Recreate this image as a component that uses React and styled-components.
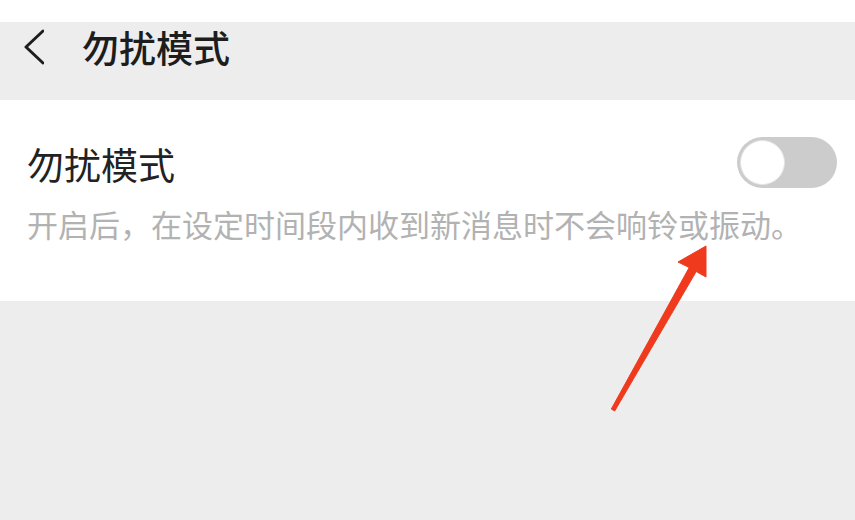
import React from "react"
import styled, { createGlobalStyle } from "styled-components"

const GlobalStyle = createGlobalStyle`
  html, body {
    margin: 0;
    padding: 0;
    background: #ededed;
  }
  body {
    font-family: "Noto Sans CJK SC", "Noto Sans", sans-serif;
  }
`

const Page = styled.div`
  position: relative;
  width: 855px;
  height: 520px;
  display: flex;
  flex-direction: column;
  background: #ededed;
  overflow: hidden;
`

const StatusStrip = styled.div`
  height: 22px;
  background: #ffffff;
`

const NavBar = styled.header`
  height: 78px;
  box-sizing: border-box;
  padding: 0 0 28px 24px;
  display: flex;
  align-items: flex-start;
  background: #ededed;
`

const NavRow = styled.div`
  height: 50px;
  display: flex;
  align-items: center;
  gap: 38px;
`

const BackIcon = styled.svg`
  width: 20px;
  height: 38px;
  display: block;
`

const Title = styled.h1`
  margin: 0;
  font-size: 37px;
  font-weight: 500;
  line-height: 50px;
  color: #1d1d1d;
`

const Card = styled.section`
  background: #ffffff;
  padding: 38px 18px 57px 27px;
  display: flex;
  flex-direction: column;
  gap: 14px;
`

const SettingRow = styled.div`
  height: 52px;
  display: flex;
  align-items: center;
  justify-content: space-between;
`

const Label = styled.span`
  font-size: 37px;
  line-height: 52px;
  color: #222222;
`

const Switch = styled.div`
  position: relative;
  width: 100px;
  height: 51px;
  margin-top: -3px;
  border-radius: 26px;
  background: ${p => (p.$on ? "#07c160" : "#cccccc")};
`

const Knob = styled.div`
  position: absolute;
  top: 3px;
  left: ${p => (p.$on ? "52px" : "3px")};
  width: 45px;
  height: 45px;
  box-sizing: border-box;
  border-radius: 50%;
  background: #ffffff;
  border: 1px solid #e4e4e4;
`

const Hint = styled.p`
  margin: 0;
  font-size: 31px;
  line-height: 40px;
  color: #b2b2b2;
  white-space: nowrap;
`

const Filler = styled.div`
  flex: 1;
  background: #ededed;
`

const Arrow = styled.svg`
  position: absolute;
  left: 0;
  top: 0;
  width: 855px;
  height: 520px;
  pointer-events: none;
`

const App = () => {
  return (
    <>
      <GlobalStyle />
      <Page>
        <StatusStrip />
        <NavBar>
          <NavRow>
            <BackIcon viewBox="0 0 20 38">
              <path
                d="M19 3 L2 19 L19 35"
                fill="none"
                stroke="#1d1d1d"
                strokeWidth="3"
                strokeLinecap="round"
                strokeLinejoin="round"
              />
            </BackIcon>
            <Title>勿扰模式</Title>
          </NavRow>
        </NavBar>
        <Card>
          <SettingRow>
            <Label>勿扰模式</Label>
            <Switch>
              <Knob />
            </Switch>
          </SettingRow>
          <Hint>开启后，在设定时间段内收到新消息时不会响铃或振动。</Hint>
        </Card>
        <Filler />
        <Arrow viewBox="0 0 855 520">
          <polygon
            points="611.3,409 689.2,267.5 678,262 706,246 706,277 696.2,271.5 614.7,411"
            fill="#f03a1e"
            stroke="#f03a1e"
            strokeWidth="1"
            strokeLinejoin="round"
          />
        </Arrow>
      </Page>
    </>
  )
}

export default App
